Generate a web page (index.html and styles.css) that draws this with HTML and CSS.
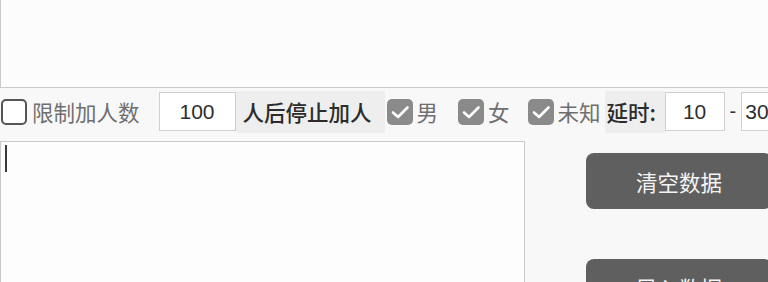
FILE: index.html
```html
<!DOCTYPE html>
<html lang="zh-CN">
<head>
<meta charset="utf-8">
<link rel="stylesheet" href="styles.css">
</head>
<body>
<div class="page">
  <div class="top-box"></div>
  <div class="toolbar">
    <span class="cb cb-off"></span>
    <span class="lbl lbl-muted lbl-limit">限制加人数</span>
    <span class="field field-count">100</span>
    <span class="tag tag-stop">人后停止加人</span>
    <span class="cb cb-on cb-male"><svg viewBox="0 0 26 26" width="26" height="26"><path d="M6 13.5 L11 18 L20.5 8.5" fill="none" stroke="#fff" stroke-width="2.6" stroke-linecap="round" stroke-linejoin="round"/></svg></span>
    <span class="lbl lbl-muted">男</span>
    <span class="cb cb-on cb-female"><svg viewBox="0 0 26 26" width="26" height="26"><path d="M6 13.5 L11 18 L20.5 8.5" fill="none" stroke="#fff" stroke-width="2.6" stroke-linecap="round" stroke-linejoin="round"/></svg></span>
    <span class="lbl lbl-muted">女</span>
    <span class="cb cb-on cb-unknown"><svg viewBox="0 0 26 26" width="26" height="26"><path d="M6 13.5 L11 18 L20.5 8.5" fill="none" stroke="#fff" stroke-width="2.6" stroke-linecap="round" stroke-linejoin="round"/></svg></span>
    <span class="lbl lbl-muted">未知</span>
    <span class="tag tag-delay">延时:</span>
    <span class="field field-min">10</span>
    <span class="dash">-</span>
    <span class="field field-max">30</span>
  </div>
  <div class="main">
    <div class="text-area"><span class="caret"></span></div>
    <div class="actions">
      <button class="btn">清空数据</button>
      <button class="btn">导入数据</button>
    </div>
  </div>
</div>
</body>
</html>
```
FILE: styles.css
```css
html, body {
  margin: 0;
  padding: 0;
  background: #f8f8f8;
  overflow: hidden;
}
body {
  width: 768px;
  height: 282px;
  font-family: "Noto Sans CJK SC", "Noto Sans", sans-serif;
}
.page {
  width: 768px;
  height: 282px;
  overflow: hidden;
}
.top-box {
  height: 87px;
  width: 900px;
  background: #fcfcfc;
  border-left: 1px solid #c9c9c9;
  border-bottom: 1px solid #c9c9c9;
}
.toolbar {
  display: flex;
  align-items: center;
  height: 45px;
  margin-top: 1px;
  white-space: nowrap;
  width: 900px;
}
.toolbar > * { flex: none; }
.cb {
  box-sizing: border-box;
  width: 26px;
  height: 26px;
  border-radius: 5px;
  display: flex;
}
.cb-off {
  margin-left: 1px;
  border: 2.5px solid #555555;
  background: #fff;
}
.cb-on {
  background: #8a8a8a;
  margin-left: 2px;
}
.cb-female { margin-left: 20px; }
.cb-unknown { margin-left: 18px; }
.lbl {
  font-size: 21.5px;
  line-height: 28px;
  margin-left: 4px;
}
.lbl-muted { color: #6f6f6f; }
.lbl-limit { margin-left: 5px; }
.field {
  box-sizing: border-box;
  height: 39px;
  background: #fff;
  border: 1px solid #cfcfcf;
  font-size: 21px;
  color: #2e2e2e;
  display: flex;
  align-items: center;
  justify-content: center;
  font-family: "Liberation Sans", "Noto Sans", sans-serif;
}
.field-count {
  width: 77px;
  margin-left: 19px;
}
.tag {
  background: #eeeeee;
  height: 42px;
  display: flex;
  align-items: center;
  font-size: 21.5px;
  color: #2c2c2c;
  font-weight: 500;
}
.tag-stop {
  width: 149px;
  padding-left: 7px;
  box-sizing: border-box;
}
.tag-delay {
  width: 60px;
  margin-left: 4px;
  padding-left: 2px;
  box-sizing: border-box;
}
.field-min {
  width: 60px;
}
.dash {
  font-size: 20px;
  color: #333;
  margin: 0 5px 0 5px;
  font-family: "Liberation Sans", sans-serif;
}
.field-max {
  width: 60px;
  justify-content: flex-start;
  padding-left: 3px;
}
.main {
  display: flex;
  margin-top: 7px;
}
.text-area {
  flex: none;
  box-sizing: border-box;
  width: 525px;
  height: 160px;
  background: #fdfdfd;
  border: 1px solid #c9c9c9;
  padding: 3px 4px;
}
.caret {
  display: block;
  width: 2px;
  height: 27px;
  background: #3a3a3a;
}
.actions {
  flex: none;
  display: flex;
  flex-direction: column;
  margin-left: 61px;
  padding-top: 12px;
  gap: 50px;
}
.btn {
  width: 186px;
  height: 56px;
  border: none;
  border-radius: 8px;
  background: #5f5f5f;
  color: #f4f4f4;
  font-family: "Noto Sans CJK SC", sans-serif;
  font-size: 21.5px;
  padding: 0;
  text-align: center;
  white-space: nowrap;
}
```
